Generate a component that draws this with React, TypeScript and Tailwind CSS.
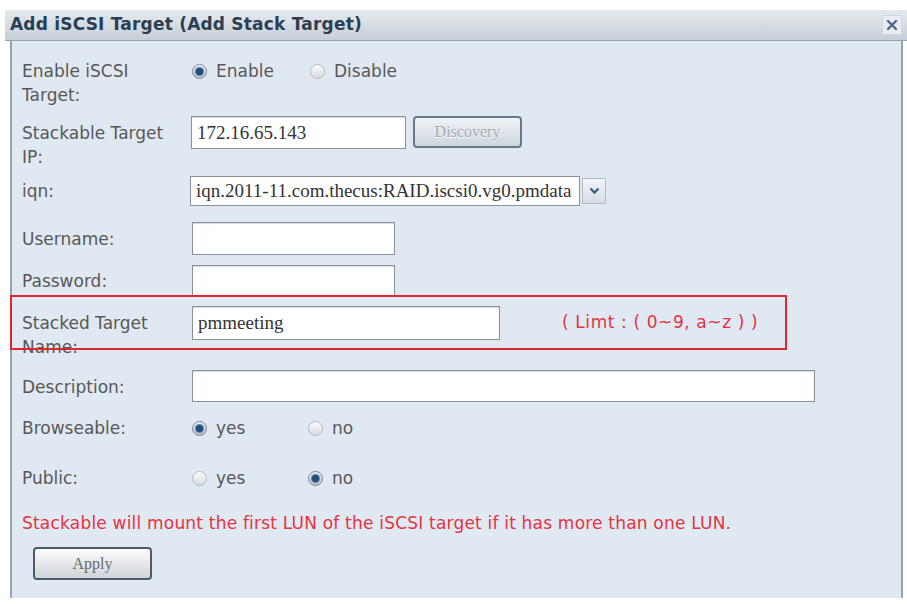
import React from 'react';

const SANS = "font-['DejaVu_Sans',Verdana,sans-serif]";
const SERIF = "font-['Liberation_Serif','Times_New_Roman',serif]";

const Radio: React.FC<{ checked?: boolean; label: string; className?: string }> = ({ checked, label, className }) => (
    <label className={`flex items-center gap-[9px] ${className ?? ''}`}>
        {checked ? (
            <span className="w-[15px] h-[15px] rounded-full border border-[#7d8790] bg-linear-to-b from-[#e9edf1] to-[#b9c2ca] flex items-center justify-center">
                <span className="w-[7px] h-[7px] rounded-full bg-[#1e4f7c] shadow-[0_0_0_1px_#5b88b0]"></span>
            </span>
        ) : (
            <span className="w-[15px] h-[15px] rounded-full border border-[#b3b9bf] bg-linear-to-b from-[#fbfbfb] to-[#d7dbdf]"></span>
        )}
        <span>{label}</span>
    </label>
);

const TextBox: React.FC<{ width: string; height: string; value?: string }> = ({ width, height, value }) => (
    <div className={`${width} ${height} bg-white border border-[#8a9198] shadow-[inset_0_1px_1px_rgba(0,0,0,0.15)] flex items-center px-[5px] ${SERIF} text-[19px] text-[#333]`}>
        {value}
    </div>
);

const App: React.FC = () => {
    return (
        <div className={`w-[907px] h-[604px] bg-white pt-[10px] overflow-hidden ${SANS}`}>
            {/* Title bar */}
            <div className="ml-[5px] h-[31px] bg-linear-to-b from-[#e6eaee] to-[#c6cfd8] border-b border-[#9aa4ae] flex items-center pl-[5px] pr-[5px]">
                <h1 className="text-[17px] font-bold text-[#2b3e53] tracking-[0.2px]">Add iSCSI Target (Add Stack Target)</h1>
                <button className="ml-auto w-[20px] h-[20px] bg-[#e9edf1] border border-[#d2d8de] flex items-center justify-center">
                    <svg width="12" height="12" viewBox="0 0 12 12">
                        <path d="M2 2L10 10M10 2L2 10" stroke="#4a6690" strokeWidth="2.4" strokeLinecap="round" />
                    </svg>
                </button>
            </div>

            {/* Body */}
            <div className="ml-[10px] w-[893px] h-[557px] bg-[#e0e8f2] border-x-2 border-[#99a2ac] pl-[10px] pt-[18px] text-[17px] text-[#585858] leading-[24px]">
                {/* Enable */}
                <div className="flex h-[24px]">
                    <div className="w-[170px] shrink-0">Enable iSCSI<br />Target:</div>
                    <div className="flex items-center">
                        <Radio checked label="Enable" className="w-[118px]" />
                        <Radio label="Disable" />
                    </div>
                </div>

                {/* Stackable IP */}
                <div className="flex h-[33px] mt-[33px]">
                    <div className="w-[169px] shrink-0 pt-[5px]">Stackable Target<br />IP:</div>
                    <TextBox width="w-[215px]" height="h-[33px]" value="172.16.65.143" />
                    <button className={`ml-[7px] w-[109px] h-[32px] rounded-[4px] border-2 border-[#6a7987] bg-linear-to-b from-[#f0f4f7] to-[#cdd6de] ${SERIF} text-[16px] text-[#a3abb3] [text-shadow:0_1px_0_#fff]`}>
                        Discovery
                    </button>
                </div>

                {/* iqn */}
                <div className="flex h-[30px] mt-[27px]">
                    <div className="w-[168px] shrink-0 pt-[3px]">iqn:</div>
                    <div className={`w-[390px] h-[30px] bg-white border border-[#8a9198] flex items-center px-[5px] ${SERIF} text-[19px] text-[#333] whitespace-nowrap overflow-hidden`}>
                        iqn.2011-11.com.thecus:RAID.iscsi0.vg0.pmdata
                    </div>
                    <div className="ml-[2px] mt-[2px] w-[24px] h-[26px] border border-[#b3bbc3] bg-linear-to-b from-[#f4f6f8] to-[#d5dce3] flex items-center justify-center">
                        <svg width="11" height="8" viewBox="0 0 11 8">
                            <path d="M1.5 1.5L5.5 5.5L9.5 1.5" stroke="#3d5f86" strokeWidth="2.4" fill="none" />
                        </svg>
                    </div>
                </div>

                {/* Username */}
                <div className="flex h-[33px] mt-[16px]">
                    <div className="w-[170px] shrink-0 pt-[5px]">Username:</div>
                    <TextBox width="w-[203px]" height="h-[33px]" />
                </div>

                {/* Password */}
                <div className="flex h-[32px] mt-[10px]">
                    <div className="w-[170px] shrink-0 pt-[4px]">Password:</div>
                    <TextBox width="w-[203px]" height="h-[32px]" />
                </div>

                {/* Stacked Target Name */}
                <div className="relative flex h-[34px] mt-[9px]">
                    <div className="w-[170px] shrink-0 pt-[5px]">Stacked Target<br />Name:</div>
                    <TextBox width="w-[308px]" height="h-[34px]" value="pmmeeting" />
                    <span className="ml-[62px] pt-[4px] text-[17px] tracking-[0.6px] text-[#e3343f] whitespace-nowrap">( Limt : ( 0~9, a~z ) )</span>
                    <div className="absolute left-[-12px] top-[-11px] w-[777px] h-[55px] border-2 border-[#e0262f] pointer-events-none"></div>
                </div>

                {/* Description */}
                <div className="flex h-[32px] mt-[30px]">
                    <div className="w-[170px] shrink-0 pt-[5px]">Description:</div>
                    <TextBox width="w-[623px]" height="h-[32px]" />
                </div>

                {/* Browseable */}
                <div className="flex h-[24px] mt-[14px]">
                    <div className="w-[170px] shrink-0">Browseable:</div>
                    <div className="flex items-center">
                        <Radio checked label="yes" className="w-[116px]" />
                        <Radio label="no" />
                    </div>
                </div>

                {/* Public */}
                <div className="flex h-[24px] mt-[26px]">
                    <div className="w-[170px] shrink-0">Public:</div>
                    <div className="flex items-center">
                        <Radio label="yes" className="w-[116px]" />
                        <Radio checked label="no" />
                    </div>
                </div>

                <p className="mt-[21px] text-[17px] tracking-[0.2px] text-[#e3343f] whitespace-nowrap">
                    Stackable will mount the first LUN of the iSCSI target if it has more than one LUN.
                </p>

                <button className={`mt-[12px] ml-[11px] w-[119px] h-[33px] rounded-[4px] border-2 border-[#4e5b67] bg-linear-to-b from-[#fdfdfd] to-[#cfd4d9] ${SERIF} text-[16px] text-[#6a6a6a]`}>
                    Apply
                </button>
            </div>
        </div>
    );
};

export default App;
